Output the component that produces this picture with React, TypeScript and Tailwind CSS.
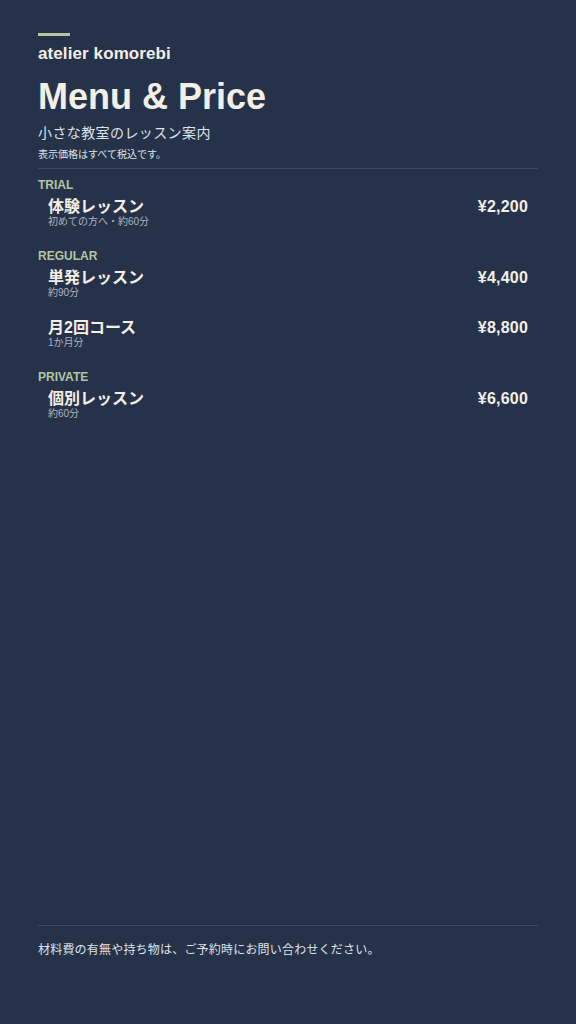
const sections = [
  {
    label: 'TRIAL',
    items: [{ name: '体験レッスン', note: '初めての方へ・約60分', price: '¥2,200' }],
  },
  {
    label: 'REGULAR',
    items: [
      { name: '単発レッスン', note: '約90分', price: '¥4,400' },
      { name: '月2回コース', note: '1か月分', price: '¥8,800' },
    ],
  },
  {
    label: 'PRIVATE',
    items: [{ name: '個別レッスン', note: '約60分', price: '¥6,600' }],
  },
];

export default function App() {
  return (
    <div
      className="flex min-h-[1024px] w-full flex-col bg-[#263249] px-[38px] pt-[33px] pb-[65px] text-[#f3efe6]"
      style={{ fontFamily: '"Liberation Sans", "Noto Sans CJK JP", sans-serif' }}
    >
      {/* header */}
      <div className="h-[3px] w-8 bg-[#b3c6a1]" />
      <div className="mt-2 text-[17px] font-bold leading-5 tracking-[0.1px]">atelier komorebi</div>
      <h1 className="mt-[13px] text-[36px] leading-10 font-bold">Menu &amp; Price</h1>
      <p className="mt-[7px] text-[14px] leading-[18px] tracking-[0.4px] text-[#dfe2e8]">小さな教室のレッスン案内</p>
      <p className="mt-[6px] text-[10px] leading-[14px] text-[#dfe2e8]">表示価格はすべて税込です。</p>
      <div className="mt-[6px] h-px bg-[#3e4b63]" />

      {/* menu */}
      <div className="mt-2 flex flex-col gap-5">
        {sections.map((s) => (
          <div key={s.label}>
            <div className="text-[12px] font-bold leading-4 text-[#b3c6a1]">{s.label}</div>
            <div className="mt-[5px] flex flex-col gap-5">
              {s.items.map((it) => (
                <div key={it.name} className="flex items-start justify-between px-[10px]">
                  <div>
                    <div className="text-[16px] font-bold leading-[18px]">{it.name}</div>
                    <div className="text-[10px] leading-3 text-[#aeb4c0]">{it.note}</div>
                  </div>
                  <div className="text-[16px] font-bold leading-[18px] tracking-[0.2px]">{it.price}</div>
                </div>
              ))}
            </div>
          </div>
        ))}
      </div>

      {/* footer */}
      <div className="mt-auto h-px bg-[#3e4b63]" />
      <p className="mt-[15px] text-[12px] leading-[18px] tracking-[0.2px] text-[#dfe2e8]">
        材料費の有無や持ち物は、ご予約時にお問い合わせください。
      </p>
    </div>
  );
}
